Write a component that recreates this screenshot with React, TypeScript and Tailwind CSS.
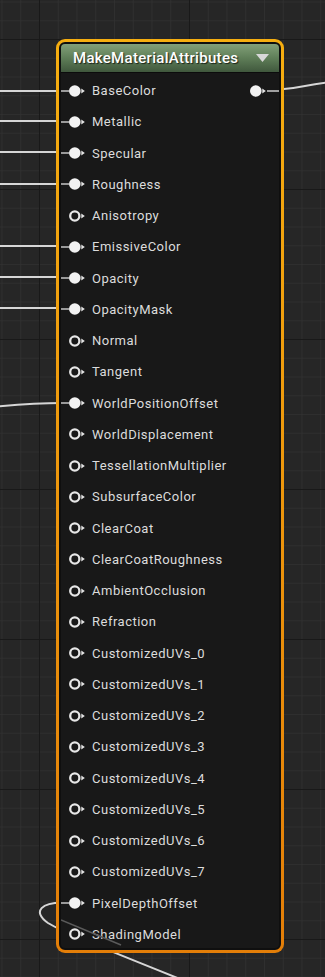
import React from "react";

type Pin = { name: string; linked: boolean };

const PINS: Pin[] = [
  { name: "BaseColor", linked: true },
  { name: "Metallic", linked: true },
  { name: "Specular", linked: true },
  { name: "Roughness", linked: true },
  { name: "Anisotropy", linked: false },
  { name: "EmissiveColor", linked: true },
  { name: "Opacity", linked: true },
  { name: "OpacityMask", linked: true },
  { name: "Normal", linked: false },
  { name: "Tangent", linked: false },
  { name: "WorldPositionOffset", linked: true },
  { name: "WorldDisplacement", linked: false },
  { name: "TessellationMultiplier", linked: false },
  { name: "SubsurfaceColor", linked: false },
  { name: "ClearCoat", linked: false },
  { name: "ClearCoatRoughness", linked: false },
  { name: "AmbientOcclusion", linked: false },
  { name: "Refraction", linked: false },
  { name: "CustomizedUVs_0", linked: false },
  { name: "CustomizedUVs_1", linked: false },
  { name: "CustomizedUVs_2", linked: false },
  { name: "CustomizedUVs_3", linked: false },
  { name: "CustomizedUVs_4", linked: false },
  { name: "CustomizedUVs_5", linked: false },
  { name: "CustomizedUVs_6", linked: false },
  { name: "CustomizedUVs_7", linked: false },
  { name: "PixelDepthOffset", linked: true },
  { name: "ShadingModel", linked: false },
];

function PinIcon({ linked }: { linked: boolean }) {
  return (
    <svg width="17" height="12" viewBox="0 0 17 12" className="shrink-0">
      {linked ? (
        <circle cx="5.8" cy="6" r="5.8" fill="#f2f2f2" />
      ) : (
        <circle cx="5.8" cy="6" r="4.6" fill="#181818" stroke="#e6e6e6" strokeWidth="2.3" />
      )}
      <polygon points="12.3,3.4 15.8,6 12.3,8.6" fill="#e6e6e6" />
    </svg>
  );
}

function Canvas() {
  const wire = "#d6d6d6";
  return (
    <svg className="absolute inset-0" width="325" height="977">
      <defs>
        <pattern id="minor" x="1.5" y="1.5" width="18.75" height="18.75" patternUnits="userSpaceOnUse">
          <path d="M0 0 H18.75 M0 0 V18.75" stroke="#313131" strokeWidth="1.6" fill="none" />
        </pattern>
        <pattern id="major" x="39" y="39" width="150" height="150" patternUnits="userSpaceOnUse">
          <path d="M0 0 H150 M0 0 V150" stroke="#191919" strokeWidth="2" fill="none" />
        </pattern>
      </defs>
      <rect width="325" height="977" fill="#262626" />
      <rect width="325" height="977" fill="url(#minor)" />
      <rect width="325" height="977" fill="url(#major)" />
      <g stroke={wire} strokeWidth="2" fill="none">
        <path d="M-5 91 H62" />
        <path d="M-5 121 H62" />
        <path d="M-5 152 H62" />
        <path d="M-5 184 H62" />
        <path d="M-5 246 H62" />
        <path d="M-5 277 H62" />
        <path d="M-5 308 H62" />
        <path d="M-20 408 C 10 405, 30 403, 62 403" />
        <path d="M268 90 C 290 90, 300 86, 330 82" />
        <path d="M69 903 C 40 901, 32 912, 48 923 C 62 932, 120 955, 200 987" />
      </g>
    </svg>
  );
}

export default function App() {
  return (
    <div className="relative w-[325px] h-[977px] overflow-hidden bg-[#262626] font-['Roboto',sans-serif]">
      <Canvas />
      <div className="relative pl-[56px] pt-[39px]">
        <div className="w-[228px] h-[914px] rounded-[9px] p-[3px] bg-gradient-to-b from-[#f6ae10] to-[#e37e08]">
          <div className="relative h-full rounded-[6px] border-2 border-[#0f0f0f] bg-[#181818] overflow-hidden flex flex-col">
            <div className="h-[29px] shrink-0 flex items-center justify-between pl-[12px] pr-[10px] bg-gradient-to-b from-[#82a079] via-[#5f7e58] to-[#40583d] border-b border-[#0c0c0c]">
              <span className="text-white text-[15px] tracking-[0.3px] font-medium leading-none [text-shadow:1px_1px_1px_rgba(0,0,0,0.7)]">
                MakeMaterialAttributes
              </span>
              <svg width="13" height="8" viewBox="0 0 13 8">
                <polygon points="0,0 13,0 6.5,8" fill="#d8d8d8" />
              </svg>
            </div>
            <div className="pt-[2px] flex flex-col">
              {PINS.map((p, i) => (
                <div key={p.name} className="h-[31.25px] flex items-center">
                  <div className={`w-[8px] h-[2px] ${p.linked ? "bg-[#9a9a9a]" : "bg-transparent"}`} />
                  <PinIcon linked={p.linked} />
                  <span className="ml-[6px] text-[13px] tracking-[0.5px] leading-none text-[#dcdcdc] whitespace-nowrap">
                    {p.name}
                  </span>
                  {i === 0 && (
                    <div className="ml-auto flex items-center">
                      <PinIcon linked />
                      <div className="w-[12px] h-[2px] bg-[#a0a0a0]" />
                    </div>
                  )}
                </div>
              ))}
            </div>
            {/* wire seen faintly through the node body */}
            <svg className="absolute left-0 bottom-0 pointer-events-none" width="224" height="40">
              <path d="M0 12 L60 37" stroke="#5a5a5a" strokeWidth="1.5" fill="none" />
            </svg>
          </div>
        </div>
      </div>
    </div>
  );
}
